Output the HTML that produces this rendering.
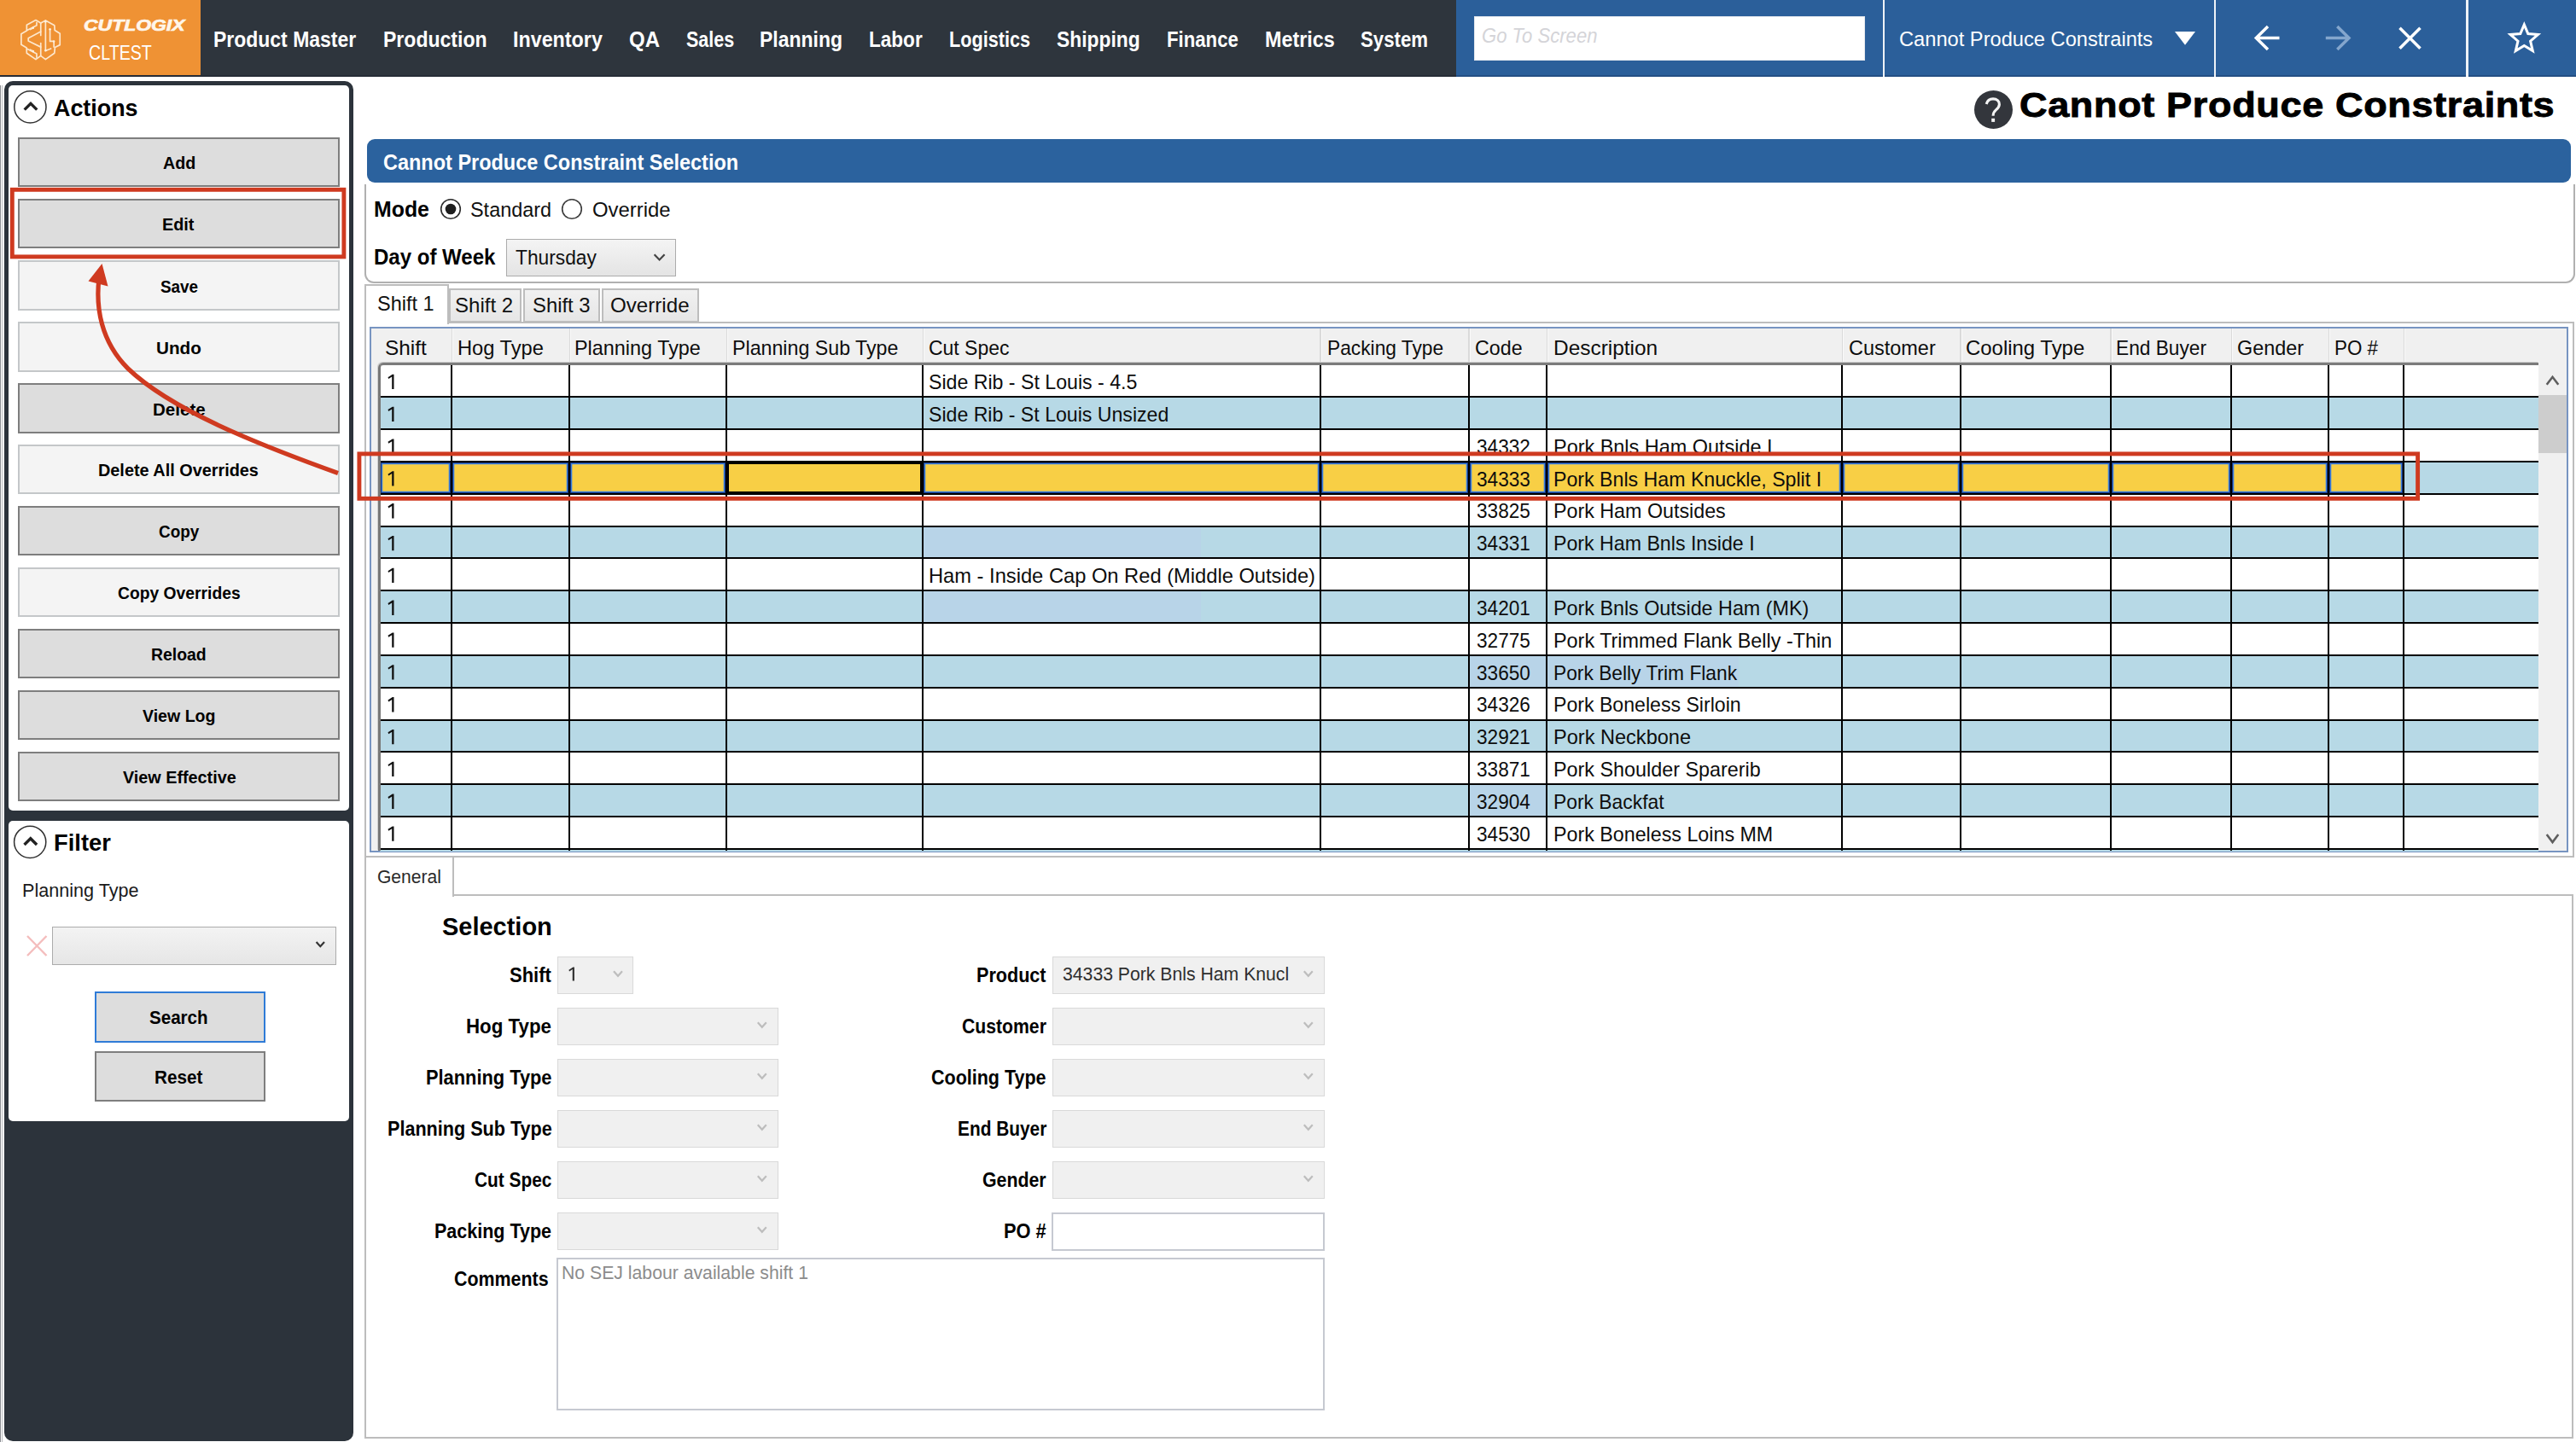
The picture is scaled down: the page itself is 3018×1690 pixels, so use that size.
<!DOCTYPE html>
<html><head><meta charset="utf-8"><title>Cannot Produce Constraints</title>
<style>
html,body{margin:0;padding:0;background:#fff;}
body{width:3018px;height:1690px;position:relative;overflow:hidden;font-family:"Liberation Sans", sans-serif;}
div,span.t,svg{position:absolute;box-sizing:border-box;}
span.t{white-space:pre;line-height:1;transform-origin:0 0;}
</style></head>
<body>
<!-- bg -->

<!-- top -->
<div style="left:0px;top:0px;width:3018px;height:90px;background:#2E353D;"></div>
<div style="left:0px;top:0px;width:234.5px;height:88.3px;background:#EF9234;"></div>
<div style="left:1706px;top:0px;width:1312px;height:90px;background:#2B5F9A;"></div>
<div style="left:0px;top:88px;width:3018px;height:2px;background:rgba(0,0,20,0.16);"></div>
<div style="left:1727px;top:18.75px;width:458px;height:51.75px;background:#fff;border:1px solid #e4e8ee;"></div>
<div style="left:2205.5px;top:0px;width:2.5px;height:90px;background:#eef2f7;"></div>
<div style="left:2593.5px;top:0px;width:2.5px;height:90px;background:#eef2f7;"></div>
<div style="left:2889px;top:0px;width:2.5px;height:90px;background:#eef2f7;"></div>
<svg style="left:0px;top:0px" width="3018" height="90" viewBox="0 0 3018 90">
<g fill="none" stroke="#fff3e2" stroke-width="1.7" stroke-linejoin="round" stroke-linecap="round" opacity="0.88"><path d="M31.32,29.32 L41.93,23.49 L47.75,27.03 L53.37,23.91 L63.78,29.73 L64.19,35.56 L70.23,39.30 L70.23,52.62 L64.40,55.53 L63.78,62.19 L53.37,69.68 L47.75,65.31 L41.93,69.68 L31.32,62.19 L31.11,55.95 L24.87,52.20 L24.87,39.72 L31.32,35.98 Z"/><path d="M31.73,35.56 L42.97,29.73 L42.97,26.40"/><path d="M47.75,37.02 L33.19,44.71 L33.19,48.04 L47.75,55.12"/><path d="M31.73,57.20 L42.97,63.02 L42.97,67.19"/><path d="M47.75,27.03 L47.75,41.38"/><path d="M47.75,50.54 L47.75,65.31"/><path d="M53.37,24.32 L53.37,59.49 L59.61,56.99"/><path d="M58.57,34.31 L58.57,48.46 L63.15,48.46 L63.15,55.12"/><path d="M38.81,32.65 L35.48,34.52"/><path d="M38.81,60.11 L35.48,58.24"/></g>
<g fill="#fff3e2" opacity="0.9"><circle cx="38.81" cy="32.65" r="1.3"/><circle cx="38.81" cy="60.11" r="1.3"/><circle cx="58.57" cy="34.31" r="1.3"/><circle cx="63.15" cy="48.46" r="1.3"/><circle cx="53.37" cy="25.36" r="1.3"/><circle cx="53.37" cy="59.28" r="1.3"/></g>
<path d="M2548,37 L2572,37 L2560,52.8 Z" fill="#fff"/>
<g fill="none" stroke="#fff" stroke-width="3.5" stroke-linecap="butt" stroke-linejoin="miter">
<path d="M2670.5,44.6 L2644,44.6 M2657,31.1 L2643.3,44.6 L2657,58.1"/>
<path d="M2811.5,32.8 L2835.5,56.8 M2835.5,32.8 L2811.5,56.8"/>
<path d="M2957.3,28.8 L2961.8,39.6 L2973.5,40.5 L2964.6,48.2 L2967.3,59.6 L2957.3,53.5 L2947.3,59.6 L2950.0,48.2 L2941.1,40.5 L2952.8,39.6 Z" stroke-width="3" stroke-linejoin="miter"/>
</g>
<g fill="none" stroke="#84a6cd" stroke-width="3.5">
<path d="M2724.8,44.6 L2751.3,44.6 M2738.3,31.1 L2752,44.6 L2738.3,58.1"/>
</g>
</svg>
<span class="t" style="left:250.08px;top:33.70px;font-size:25px;color:#fff;font-weight:bold;transform:scaleX(0.9186);">Product Master</span>
<span class="t" style="left:449.08px;top:33.70px;font-size:25px;color:#fff;font-weight:bold;transform:scaleX(0.9216);">Production</span>
<span class="t" style="left:601.07px;top:33.70px;font-size:25px;color:#fff;font-weight:bold;transform:scaleX(0.9317);">Inventory</span>
<span class="t" style="left:736.54px;top:33.70px;font-size:25px;color:#fff;font-weight:bold;transform:scaleX(0.9603);">QA</span>
<span class="t" style="left:804.00px;top:33.70px;font-size:25px;color:#fff;font-weight:bold;transform:scaleX(0.8614);">Sales</span>
<span class="t" style="left:890.08px;top:33.70px;font-size:25px;color:#fff;font-weight:bold;transform:scaleX(0.9198);">Planning</span>
<span class="t" style="left:1018.10px;top:33.70px;font-size:25px;color:#fff;font-weight:bold;transform:scaleX(0.9023);">Labor</span>
<span class="t" style="left:1111.63px;top:33.70px;font-size:25px;color:#fff;font-weight:bold;transform:scaleX(0.8670);">Logistics</span>
<span class="t" style="left:1238.00px;top:33.70px;font-size:25px;color:#fff;font-weight:bold;transform:scaleX(0.9134);">Shipping</span>
<span class="t" style="left:1366.61px;top:33.70px;font-size:25px;color:#fff;font-weight:bold;transform:scaleX(0.8871);">Finance</span>
<span class="t" style="left:1481.57px;top:33.70px;font-size:25px;color:#fff;font-weight:bold;transform:scaleX(0.9342);">Metrics</span>
<span class="t" style="left:1594.00px;top:33.70px;font-size:25px;color:#fff;font-weight:bold;transform:scaleX(0.8893);">System</span>
<span class="t" style="left:1736.10px;top:29.62px;font-size:24.5px;color:#d4d4d8;font-style:italic;transform:scaleX(0.9015);">Go To Screen</span>
<span class="t" style="left:2225.03px;top:34.12px;font-size:24.5px;color:#fff;transform:scaleX(0.9656);">Cannot Produce Constraints</span>
<span class="t" style="left:98.40px;top:20.91px;font-size:18.5px;color:#fff6ea;font-weight:bold;font-style:italic;-webkit-text-stroke:0.7px #fff6ea;transform:scaleX(1.2402);">CUTLOGIX</span>
<span class="t" style="left:104.18px;top:49.83px;font-size:24px;color:#fff;transform:scaleX(0.8183);">CLTEST</span>
<!-- side -->
<div style="left:0px;top:100px;width:1px;height:1590px;background:#8a8d91;"></div>
<div style="left:2px;top:100px;width:1px;height:1590px;background:#b9bbbe;"></div>
<div style="left:4.7px;top:94.7px;width:409.3px;height:1594.3px;background:#2C333B;border-radius:10px;"></div>
<div style="left:10.4px;top:99.6px;width:398.6px;height:850.4px;background:#fff;border-radius:5px;"></div>
<div style="left:10.4px;top:962px;width:398.6px;height:352.4px;background:#fff;border-radius:5px;"></div>
<div style="left:20.75px;top:160.6px;width:377.5px;height:58.8px;background:#DDDDDD;border:2px solid #7e7e7e;"></div>
<div style="left:20.75px;top:232.6px;width:377.5px;height:58.8px;background:#DDDDDD;border:2px solid #7e7e7e;"></div>
<div style="left:20.75px;top:305.1px;width:377.5px;height:58.8px;background:#F4F4F4;border:2px solid #C4C7C9;"></div>
<div style="left:20.75px;top:377.1px;width:377.5px;height:58.8px;background:#F4F4F4;border:2px solid #C4C7C9;"></div>
<div style="left:20.75px;top:449.1px;width:377.5px;height:58.8px;background:#DDDDDD;border:2px solid #7e7e7e;"></div>
<div style="left:20.75px;top:520.6px;width:377.5px;height:58.8px;background:#F4F4F4;border:2px solid #C4C7C9;"></div>
<div style="left:20.75px;top:592.6px;width:377.5px;height:58.8px;background:#DDDDDD;border:2px solid #7e7e7e;"></div>
<div style="left:20.75px;top:664.6px;width:377.5px;height:58.8px;background:#F4F4F4;border:2px solid #C4C7C9;"></div>
<div style="left:20.75px;top:736.6px;width:377.5px;height:58.8px;background:#DDDDDD;border:2px solid #7e7e7e;"></div>
<div style="left:20.75px;top:808.6px;width:377.5px;height:58.8px;background:#DDDDDD;border:2px solid #7e7e7e;"></div>
<div style="left:20.75px;top:880.6px;width:377.5px;height:58.8px;background:#DDDDDD;border:2px solid #7e7e7e;"></div>
<div style="left:60.75px;top:1086.25px;width:333.5px;height:45px;background:linear-gradient(#F3F3F3,#E6E6E6);border:1.5px solid #ACACAC;"></div>
<div style="left:110.75px;top:1162px;width:199.75px;height:59.75px;background:#DDDDDD;border:2px solid #2F7BD7;"></div>
<div style="left:110.75px;top:1232px;width:199.75px;height:59.25px;background:#DDDDDD;border:2px solid #7e7e7e;"></div>
<svg style="left:0px;top:90px" width="420" height="1600" viewBox="0 90 420 1600">
<g fill="none" stroke="#303030" stroke-width="1.5">
<circle cx="35.4" cy="125.4" r="18.6"/><circle cx="35.2" cy="986.8" r="18.6"/>
</g>
<g fill="none" stroke="#222" stroke-width="3.4" stroke-linejoin="miter">
<path d="M28.7,128.6 L36,121.3 L43.3,128.6"/><path d="M28.5,990 L35.8,982.7 L43.1,990"/>
</g>
<path d="M370.6,1104 L375.3,1109.2 L380,1104" fill="none" stroke="#333" stroke-width="2.2"/>
<path d="M32,1097 L54.5,1120 M54.5,1097 L32,1120" fill="none" stroke="#F4BDBD" stroke-width="2.4"/>
</svg>
<span class="t" style="left:63.00px;top:113.54px;font-size:27px;color:#000;font-weight:bold;transform:scaleX(0.9950);">Actions</span>
<span class="t" style="left:62.74px;top:975.04px;font-size:27px;color:#000;font-weight:bold;transform:scaleX(1.0122);">Filter</span>
<span class="t" style="left:190.75px;top:180.23px;font-size:21px;color:#000;font-weight:bold;transform:scaleX(0.9377);">Add</span>
<span class="t" style="left:190.31px;top:252.23px;font-size:21px;color:#000;font-weight:bold;transform:scaleX(0.9439);">Edit</span>
<span class="t" style="left:187.75px;top:324.73px;font-size:21px;color:#000;font-weight:bold;transform:scaleX(0.8994);">Save</span>
<span class="t" style="left:183.02px;top:396.73px;font-size:21px;color:#000;font-weight:bold;transform:scaleX(0.9842);">Undo</span>
<span class="t" style="left:178.52px;top:468.73px;font-size:21px;color:#000;font-weight:bold;transform:scaleX(0.9780);">Delete</span>
<span class="t" style="left:115.06px;top:540.23px;font-size:21px;color:#000;font-weight:bold;transform:scaleX(0.9449);">Delete All Overrides</span>
<span class="t" style="left:185.75px;top:612.23px;font-size:21px;color:#000;font-weight:bold;transform:scaleX(0.8993);">Copy</span>
<span class="t" style="left:138.00px;top:684.23px;font-size:21px;color:#000;font-weight:bold;transform:scaleX(0.9184);">Copy Overrides</span>
<span class="t" style="left:177.08px;top:756.23px;font-size:21px;color:#000;font-weight:bold;transform:scaleX(0.9239);">Reload</span>
<span class="t" style="left:167.15px;top:828.23px;font-size:21px;color:#000;font-weight:bold;transform:scaleX(0.9311);">View Log</span>
<span class="t" style="left:143.50px;top:900.23px;font-size:21px;color:#000;font-weight:bold;transform:scaleX(0.9417);">View Effective</span>
<span class="t" style="left:25.99px;top:1033.86px;font-size:21.5px;color:#1a1a1a;transform:scaleX(1.0052);">Planning Type</span>
<span class="t" style="left:175.00px;top:1183.36px;font-size:21.5px;color:#000;font-weight:bold;transform:scaleX(0.9564);">Search</span>
<span class="t" style="left:180.79px;top:1253.36px;font-size:21.5px;color:#000;font-weight:bold;transform:scaleX(0.9626);">Reset</span>
<!-- main -->
<div style="left:2312.6px;top:105.8px;width:45.2px;height:45.2px;background:#33363C;border-radius:50%;"></div>
<svg style="left:2310px;top:104px" width="50" height="50" viewBox="2310 104 50 50"><path d="M2327.2,122 C2328.4,117.6 2331.4,115.9 2335,115.9 C2339.6,115.9 2342.4,118.6 2342.4,122.2 C2342.4,125.4 2340.4,127.2 2338.4,128.9 C2336.2,130.8 2335.1,132.3 2335.1,135.7" fill="none" stroke="#f4f4f4" stroke-width="3.1"/><rect x="2333.2" y="138.8" width="3.9" height="4.1" fill="#f4f4f4"/></svg>
<div style="left:427px;top:216px;width:2589.5px;height:116px;border:2px solid #B0B0B0;border-top:none;border-radius:0 0 11px 11px;background:#fff;"></div>
<div style="left:430px;top:162.5px;width:2581.5px;height:51.5px;background:#2B629E;border-radius:9px;"></div>
<div style="left:592.5px;top:279.5px;width:199.5px;height:44px;background:linear-gradient(#F4F4F4,#E4E4E4);border:1.5px solid #ACACAC;"></div>
<div style="left:427px;top:376.5px;width:2588.5px;height:628.8px;border:2px solid #BDBDBD;background:#fff;"></div>
<div style="left:525.5px;top:337.5px;width:85.5px;height:40.5px;background:linear-gradient(#F1F1F1,#E6E6E6);border:2px solid #BDBDBD;"></div>
<div style="left:613px;top:337.5px;width:89.5px;height:40.5px;background:linear-gradient(#F1F1F1,#E6E6E6);border:2px solid #BDBDBD;"></div>
<div style="left:705px;top:337.5px;width:114px;height:40.5px;background:linear-gradient(#F1F1F1,#E6E6E6);border:2px solid #BDBDBD;"></div>
<div style="left:427px;top:333px;width:99px;height:47px;background:#fff;border:2px solid #BDBDBD;border-bottom:none;"></div>
<svg style="left:420px;top:220px" width="400" height="110" viewBox="420 220 400 110">
<g fill="#fff" stroke="#2b2b2b" stroke-width="1.6"><circle cx="528" cy="245" r="11.3"/><circle cx="670" cy="245" r="11.3" stroke="#3a3a3a"/></g>
<circle cx="528" cy="245" r="6.3" fill="#1e1e1e"/>
<path d="M766.6,298.2 L772.6,304.4 L778.6,298.2" fill="none" stroke="#444" stroke-width="2.2"/>
</svg>
<span class="t" style="left:2365.90px;top:103.39px;font-size:41px;color:#000;font-weight:bold;letter-spacing:0.6px;-webkit-text-stroke:0.9px #000;transform:scaleX(1.0978);">Cannot Produce Constraints</span>
<span class="t" style="left:449.06px;top:178.20px;font-size:25px;color:#fff;font-weight:bold;transform:scaleX(0.9391);">Cannot Produce Constraint Selection</span>
<span class="t" style="left:438.01px;top:233.20px;font-size:25px;color:#000;font-weight:bold;transform:scaleX(0.9943);">Mode</span>
<span class="t" style="left:551.04px;top:233.62px;font-size:24.5px;color:#111;transform:scaleX(0.9559);">Standard</span>
<span class="t" style="left:694.03px;top:233.62px;font-size:24.5px;color:#111;transform:scaleX(0.9749);">Override</span>
<span class="t" style="left:438.04px;top:289.20px;font-size:25px;color:#000;font-weight:bold;transform:scaleX(0.9606);">Day of Week</span>
<span class="t" style="left:604.00px;top:289.62px;font-size:24.5px;color:#111;transform:scaleX(0.9283);">Thursday</span>
<span class="t" style="left:441.54px;top:344.12px;font-size:24.5px;color:#111;transform:scaleX(0.9583);">Shift 1</span>
<span class="t" style="left:533.02px;top:345.62px;font-size:24.5px;color:#111;transform:scaleX(0.9804);">Shift 2</span>
<span class="t" style="left:624.03px;top:345.62px;font-size:24.5px;color:#111;transform:scaleX(0.9730);">Shift 3</span>
<span class="t" style="left:715.01px;top:345.62px;font-size:24.5px;color:#111;transform:scaleX(0.9857);">Override</span>
<!-- grid -->
<div style="left:432.5px;top:382.5px;width:2576.0px;height:616.5px;border:2px solid #7794C1;background:#fff;overflow:hidden;"></div>
<div style="left:434.5px;top:384.5px;width:2572.0px;height:43.0px;background:#F0F0F0;"></div>
<div style="left:434.5px;top:427.5px;width:9.5px;height:569.5px;background:#F1F1F1;"></div>
<div style="left:528.5px;top:384.5px;width:1.3px;height:40px;background:#DADADA;"></div>
<div style="left:529.8px;top:384.5px;width:1.2px;height:40px;background:#FAFAFA;"></div>
<div style="left:666.5px;top:384.5px;width:1.3px;height:40px;background:#DADADA;"></div>
<div style="left:667.8px;top:384.5px;width:1.2px;height:40px;background:#FAFAFA;"></div>
<div style="left:850.5px;top:384.5px;width:1.3px;height:40px;background:#DADADA;"></div>
<div style="left:851.8px;top:384.5px;width:1.2px;height:40px;background:#FAFAFA;"></div>
<div style="left:1080.5px;top:384.5px;width:1.3px;height:40px;background:#DADADA;"></div>
<div style="left:1081.8px;top:384.5px;width:1.2px;height:40px;background:#FAFAFA;"></div>
<div style="left:1546.25px;top:384.5px;width:1.3px;height:40px;background:#DADADA;"></div>
<div style="left:1547.55px;top:384.5px;width:1.2px;height:40px;background:#FAFAFA;"></div>
<div style="left:1720.25px;top:384.5px;width:1.3px;height:40px;background:#DADADA;"></div>
<div style="left:1721.55px;top:384.5px;width:1.2px;height:40px;background:#FAFAFA;"></div>
<div style="left:1812.0px;top:384.5px;width:1.3px;height:40px;background:#DADADA;"></div>
<div style="left:1813.3px;top:384.5px;width:1.2px;height:40px;background:#FAFAFA;"></div>
<div style="left:2157.75px;top:384.5px;width:1.3px;height:40px;background:#DADADA;"></div>
<div style="left:2159.05px;top:384.5px;width:1.2px;height:40px;background:#FAFAFA;"></div>
<div style="left:2296.25px;top:384.5px;width:1.3px;height:40px;background:#DADADA;"></div>
<div style="left:2297.55px;top:384.5px;width:1.2px;height:40px;background:#FAFAFA;"></div>
<div style="left:2472.25px;top:384.5px;width:1.3px;height:40px;background:#DADADA;"></div>
<div style="left:2473.55px;top:384.5px;width:1.2px;height:40px;background:#FAFAFA;"></div>
<div style="left:2614.0px;top:384.5px;width:1.3px;height:40px;background:#DADADA;"></div>
<div style="left:2615.3px;top:384.5px;width:1.2px;height:40px;background:#FAFAFA;"></div>
<div style="left:2727.75px;top:384.5px;width:1.3px;height:40px;background:#DADADA;"></div>
<div style="left:2729.05px;top:384.5px;width:1.2px;height:40px;background:#FAFAFA;"></div>
<div style="left:2816.0px;top:384.5px;width:1.3px;height:40px;background:#DADADA;"></div>
<div style="left:2817.3px;top:384.5px;width:1.2px;height:40px;background:#FAFAFA;"></div>
<div style="left:445px;top:465.33px;width:2528.5px;height:37.83px;background:#B7D9E6;"></div>
<div style="left:445px;top:540.99px;width:2528.5px;height:37.83px;background:#B7D9E6;"></div>
<div style="left:445px;top:616.65px;width:2528.5px;height:37.83px;background:#B7D9E6;"></div>
<div style="left:445px;top:692.31px;width:2528.5px;height:37.83px;background:#B7D9E6;"></div>
<div style="left:445px;top:767.97px;width:2528.5px;height:37.83px;background:#B7D9E6;"></div>
<div style="left:445px;top:843.63px;width:2528.5px;height:37.83px;background:#B7D9E6;"></div>
<div style="left:445px;top:919.29px;width:2528.5px;height:37.83px;background:#B7D9E6;"></div>
<div style="left:445px;top:994.95px;width:2528.5px;height:3.05px;background:#B7D9E6;"></div>
<div style="left:1082px;top:616.65px;width:325px;height:37.83px;background:#B8D4E8;"></div>
<div style="left:1082px;top:692.31px;width:325px;height:37.83px;background:#B8D4E8;"></div>
<div style="left:1722px;top:767.97px;width:315px;height:37.83px;background:#B8D4E8;"></div>
<div style="left:1722px;top:919.29px;width:90px;height:37.83px;background:#B8D4E8;"></div>
<div style="left:446px;top:542px;width:82px;height:36px;background:#F8CF45;border:1px solid #16357C;box-shadow:inset 0 0 0 1.3px #3A7FE0;"></div>
<div style="left:530px;top:542px;width:136px;height:36px;background:#F8CF45;border:1px solid #16357C;box-shadow:inset 0 0 0 1.3px #3A7FE0;"></div>
<div style="left:668px;top:542px;width:182px;height:36px;background:#F8CF45;border:1px solid #16357C;box-shadow:inset 0 0 0 1.3px #3A7FE0;"></div>
<div style="left:1082px;top:542px;width:464px;height:36px;background:#F8CF45;border:1px solid #16357C;box-shadow:inset 0 0 0 1.3px #3A7FE0;"></div>
<div style="left:1548px;top:542px;width:172px;height:36px;background:#F8CF45;border:1px solid #16357C;box-shadow:inset 0 0 0 1.3px #3A7FE0;"></div>
<div style="left:1722px;top:542px;width:89px;height:36px;background:#F8CF45;border:1px solid #16357C;box-shadow:inset 0 0 0 1.3px #3A7FE0;"></div>
<div style="left:1813px;top:542px;width:344px;height:36px;background:#F8CF45;border:1px solid #16357C;box-shadow:inset 0 0 0 1.3px #3A7FE0;"></div>
<div style="left:2159px;top:542px;width:137px;height:36px;background:#F8CF45;border:1px solid #16357C;box-shadow:inset 0 0 0 1.3px #3A7FE0;"></div>
<div style="left:2298px;top:542px;width:174px;height:36px;background:#F8CF45;border:1px solid #16357C;box-shadow:inset 0 0 0 1.3px #3A7FE0;"></div>
<div style="left:2474px;top:542px;width:139px;height:36px;background:#F8CF45;border:1px solid #16357C;box-shadow:inset 0 0 0 1.3px #3A7FE0;"></div>
<div style="left:2615px;top:542px;width:112px;height:36px;background:#F8CF45;border:1px solid #16357C;box-shadow:inset 0 0 0 1.3px #3A7FE0;"></div>
<div style="left:2729px;top:542px;width:86px;height:36px;background:#F8CF45;border:1px solid #16357C;box-shadow:inset 0 0 0 1.3px #3A7FE0;"></div>
<div style="left:446px;top:464px;width:2527.5px;height:2px;background:#000;"></div>
<div style="left:446px;top:502px;width:2527.5px;height:2px;background:#000;"></div>
<div style="left:446px;top:540px;width:2527.5px;height:2px;background:#000;"></div>
<div style="left:446px;top:578px;width:2527.5px;height:2px;background:#000;"></div>
<div style="left:446px;top:616px;width:2527.5px;height:2px;background:#000;"></div>
<div style="left:446px;top:653px;width:2527.5px;height:2px;background:#000;"></div>
<div style="left:446px;top:691px;width:2527.5px;height:2px;background:#000;"></div>
<div style="left:446px;top:729px;width:2527.5px;height:2px;background:#000;"></div>
<div style="left:446px;top:767px;width:2527.5px;height:2px;background:#000;"></div>
<div style="left:446px;top:805px;width:2527.5px;height:2px;background:#000;"></div>
<div style="left:446px;top:843px;width:2527.5px;height:2px;background:#000;"></div>
<div style="left:446px;top:880px;width:2527.5px;height:2px;background:#000;"></div>
<div style="left:446px;top:918px;width:2527.5px;height:2px;background:#000;"></div>
<div style="left:446px;top:956px;width:2527.5px;height:2px;background:#000;"></div>
<div style="left:446px;top:994px;width:2527.5px;height:2px;background:#000;"></div>
<div style="left:528px;top:428.0px;width:2px;height:569.0px;background:#000;"></div>
<div style="left:666px;top:428.0px;width:2px;height:569.0px;background:#000;"></div>
<div style="left:850px;top:428.0px;width:2px;height:569.0px;background:#000;"></div>
<div style="left:1080px;top:428.0px;width:2px;height:569.0px;background:#000;"></div>
<div style="left:1546px;top:428.0px;width:2px;height:569.0px;background:#000;"></div>
<div style="left:1720px;top:428.0px;width:2px;height:569.0px;background:#000;"></div>
<div style="left:1811px;top:428.0px;width:2px;height:569.0px;background:#000;"></div>
<div style="left:2157px;top:428.0px;width:2px;height:569.0px;background:#000;"></div>
<div style="left:2296px;top:428.0px;width:2px;height:569.0px;background:#000;"></div>
<div style="left:2472px;top:428.0px;width:2px;height:569.0px;background:#000;"></div>
<div style="left:2613px;top:428.0px;width:2px;height:569.0px;background:#000;"></div>
<div style="left:2727px;top:428.0px;width:2px;height:569.0px;background:#000;"></div>
<div style="left:2815px;top:428.0px;width:2px;height:569.0px;background:#000;"></div>
<div style="left:443px;top:424.6px;width:2530.5px;height:572.4px;border-top:3.4px solid #7b7b7b;border-left:3px solid #787878;border-top-left-radius:6px;box-shadow:-1px -1px 0 0 #CFCFCF;"></div>
<div style="left:850px;top:540px;width:232px;height:40px;background:#F8CF45;border:4px solid #000;"></div>
<div style="left:2973.5px;top:423.5px;width:33.0px;height:573.5px;background:#F0F0F0;"></div>
<div style="left:2973.5px;top:462.5px;width:33.0px;height:68.7px;background:#CDCDCD;"></div>
<svg style="left:2970px;top:430px" width="40" height="570" viewBox="2970 430 40 570">
<g fill="none" stroke="#5e5e5e" stroke-width="2.6"><path d="M2983.7,450.8 L2990.5,441.8 L2997.3,450.8"/><path d="M2983.7,978 L2990.5,987 L2997.3,978"/></g></svg>
<svg style="left:450px;top:430px" width="20" height="570" viewBox="450 430 20 570"><g fill="#101010"><path transform="translate(454.3,456.10)" d="M0.2,-13.9 L5.5,-17.3 L7.2,-17.3 L7.2,0 L4.9,0 L4.9,-14.5 L0.9,-12 Z"/><path transform="translate(454.3,493.93)" d="M0.2,-13.9 L5.5,-17.3 L7.2,-17.3 L7.2,0 L4.9,0 L4.9,-14.5 L0.9,-12 Z"/><path transform="translate(454.3,531.76)" d="M0.2,-13.9 L5.5,-17.3 L7.2,-17.3 L7.2,0 L4.9,0 L4.9,-14.5 L0.9,-12 Z"/><path transform="translate(454.3,569.59)" d="M0.2,-13.9 L5.5,-17.3 L7.2,-17.3 L7.2,0 L4.9,0 L4.9,-14.5 L0.9,-12 Z"/><path transform="translate(454.3,607.42)" d="M0.2,-13.9 L5.5,-17.3 L7.2,-17.3 L7.2,0 L4.9,0 L4.9,-14.5 L0.9,-12 Z"/><path transform="translate(454.3,645.25)" d="M0.2,-13.9 L5.5,-17.3 L7.2,-17.3 L7.2,0 L4.9,0 L4.9,-14.5 L0.9,-12 Z"/><path transform="translate(454.3,683.08)" d="M0.2,-13.9 L5.5,-17.3 L7.2,-17.3 L7.2,0 L4.9,0 L4.9,-14.5 L0.9,-12 Z"/><path transform="translate(454.3,720.91)" d="M0.2,-13.9 L5.5,-17.3 L7.2,-17.3 L7.2,0 L4.9,0 L4.9,-14.5 L0.9,-12 Z"/><path transform="translate(454.3,758.74)" d="M0.2,-13.9 L5.5,-17.3 L7.2,-17.3 L7.2,0 L4.9,0 L4.9,-14.5 L0.9,-12 Z"/><path transform="translate(454.3,796.57)" d="M0.2,-13.9 L5.5,-17.3 L7.2,-17.3 L7.2,0 L4.9,0 L4.9,-14.5 L0.9,-12 Z"/><path transform="translate(454.3,834.40)" d="M0.2,-13.9 L5.5,-17.3 L7.2,-17.3 L7.2,0 L4.9,0 L4.9,-14.5 L0.9,-12 Z"/><path transform="translate(454.3,872.23)" d="M0.2,-13.9 L5.5,-17.3 L7.2,-17.3 L7.2,0 L4.9,0 L4.9,-14.5 L0.9,-12 Z"/><path transform="translate(454.3,910.06)" d="M0.2,-13.9 L5.5,-17.3 L7.2,-17.3 L7.2,0 L4.9,0 L4.9,-14.5 L0.9,-12 Z"/><path transform="translate(454.3,947.89)" d="M0.2,-13.9 L5.5,-17.3 L7.2,-17.3 L7.2,0 L4.9,0 L4.9,-14.5 L0.9,-12 Z"/><path transform="translate(454.3,985.72)" d="M0.2,-13.9 L5.5,-17.3 L7.2,-17.3 L7.2,0 L4.9,0 L4.9,-14.5 L0.9,-12 Z"/></g></svg>
<span class="t" style="left:451.49px;top:396.03px;font-size:24px;color:#0d0d0d;transform:scaleX(1.0136);">Shift</span>
<span class="t" style="left:536.01px;top:396.03px;font-size:24px;color:#0d0d0d;transform:scaleX(0.9864);">Hog Type</span>
<span class="t" style="left:673.02px;top:396.03px;font-size:24px;color:#0d0d0d;transform:scaleX(0.9750);">Planning Type</span>
<span class="t" style="left:858.03px;top:396.03px;font-size:24px;color:#0d0d0d;transform:scaleX(0.9669);">Planning Sub Type</span>
<span class="t" style="left:1088.04px;top:396.03px;font-size:24px;color:#0d0d0d;transform:scaleX(0.9568);">Cut Spec</span>
<span class="t" style="left:1555.05px;top:396.03px;font-size:24px;color:#0d0d0d;transform:scaleX(0.9479);">Packing Type</span>
<span class="t" style="left:1727.78px;top:396.03px;font-size:24px;color:#0d0d0d;transform:scaleX(0.9683);">Code</span>
<span class="t" style="left:1819.73px;top:396.03px;font-size:24px;color:#0d0d0d;transform:scaleX(1.0174);">Description</span>
<span class="t" style="left:2165.77px;top:396.03px;font-size:24px;color:#0d0d0d;transform:scaleX(0.9778);">Customer</span>
<span class="t" style="left:2303.30px;top:396.03px;font-size:24px;color:#0d0d0d;transform:scaleX(0.9968);">Cooling Type</span>
<span class="t" style="left:2479.30px;top:396.03px;font-size:24px;color:#0d0d0d;transform:scaleX(0.9453);">End Buyer</span>
<span class="t" style="left:2620.53px;top:396.03px;font-size:24px;color:#0d0d0d;transform:scaleX(0.9740);">Gender</span>
<span class="t" style="left:2734.82px;top:396.03px;font-size:24px;color:#0d0d0d;transform:scaleX(0.9339);">PO #</span>
<span class="t" style="left:1088.04px;top:436.13px;font-size:24px;color:#0d0d0d;transform:scaleX(0.9639);">Side Rib - St Louis - 4.5</span>
<span class="t" style="left:1088.04px;top:473.96px;font-size:24px;color:#0d0d0d;transform:scaleX(0.9628);">Side Rib - St Louis Unsized</span>
<span class="t" style="left:1729.50px;top:511.79px;font-size:24px;color:#0d0d0d;transform:scaleX(0.9414);">34332</span>
<span class="t" style="left:1820.02px;top:511.79px;font-size:24px;color:#0d0d0d;transform:scaleX(0.9766);">Pork Bnls Ham Outside I</span>
<span class="t" style="left:1729.50px;top:549.62px;font-size:24px;color:#0d0d0d;transform:scaleX(0.9414);">34333</span>
<span class="t" style="left:1820.03px;top:549.62px;font-size:24px;color:#0d0d0d;transform:scaleX(0.9650);">Pork Bnls Ham Knuckle, Split I</span>
<span class="t" style="left:1729.50px;top:587.45px;font-size:24px;color:#0d0d0d;transform:scaleX(0.9414);">33825</span>
<span class="t" style="left:1820.03px;top:587.45px;font-size:24px;color:#0d0d0d;transform:scaleX(0.9695);">Pork Ham Outsides</span>
<span class="t" style="left:1729.50px;top:625.28px;font-size:24px;color:#0d0d0d;transform:scaleX(0.9414);">34331</span>
<span class="t" style="left:1820.03px;top:625.28px;font-size:24px;color:#0d0d0d;transform:scaleX(0.9651);">Pork Ham Bnls Inside I</span>
<span class="t" style="left:1088.01px;top:663.11px;font-size:24px;color:#0d0d0d;transform:scaleX(0.9872);">Ham - Inside Cap On Red (Middle Outside)</span>
<span class="t" style="left:1729.50px;top:700.94px;font-size:24px;color:#0d0d0d;transform:scaleX(0.9414);">34201</span>
<span class="t" style="left:1820.03px;top:700.94px;font-size:24px;color:#0d0d0d;transform:scaleX(0.9713);">Pork Bnls Outside Ham (MK)</span>
<span class="t" style="left:1729.50px;top:738.77px;font-size:24px;color:#0d0d0d;transform:scaleX(0.9414);">32775</span>
<span class="t" style="left:1820.03px;top:738.77px;font-size:24px;color:#0d0d0d;transform:scaleX(0.9744);">Pork Trimmed Flank Belly -Thin</span>
<span class="t" style="left:1729.50px;top:776.60px;font-size:24px;color:#0d0d0d;transform:scaleX(0.9414);">33650</span>
<span class="t" style="left:1820.05px;top:776.60px;font-size:24px;color:#0d0d0d;transform:scaleX(0.9487);">Pork Belly Trim Flank</span>
<span class="t" style="left:1729.50px;top:814.43px;font-size:24px;color:#0d0d0d;transform:scaleX(0.9414);">34326</span>
<span class="t" style="left:1820.04px;top:814.43px;font-size:24px;color:#0d0d0d;transform:scaleX(0.9630);">Pork Boneless Sirloin</span>
<span class="t" style="left:1729.50px;top:852.26px;font-size:24px;color:#0d0d0d;transform:scaleX(0.9414);">32921</span>
<span class="t" style="left:1820.02px;top:852.26px;font-size:24px;color:#0d0d0d;transform:scaleX(0.9813);">Pork Neckbone</span>
<span class="t" style="left:1729.50px;top:890.09px;font-size:24px;color:#0d0d0d;transform:scaleX(0.9414);">33871</span>
<span class="t" style="left:1820.03px;top:890.09px;font-size:24px;color:#0d0d0d;transform:scaleX(0.9725);">Pork Shoulder Sparerib</span>
<span class="t" style="left:1729.50px;top:927.92px;font-size:24px;color:#0d0d0d;transform:scaleX(0.9414);">32904</span>
<span class="t" style="left:1820.05px;top:927.92px;font-size:24px;color:#0d0d0d;transform:scaleX(0.9528);">Pork Backfat</span>
<span class="t" style="left:1729.50px;top:965.75px;font-size:24px;color:#0d0d0d;transform:scaleX(0.9414);">34530</span>
<span class="t" style="left:1820.03px;top:965.75px;font-size:24px;color:#0d0d0d;transform:scaleX(0.9691);">Pork Boneless Loins MM</span>
<!-- form -->
<div style="left:427px;top:1048px;width:2588px;height:637.5px;border:2px solid #BDBDBD;background:#fff;"></div>
<div style="left:427px;top:1005.3px;width:105px;height:46px;background:#fff;border:2px solid #BDBDBD;border-bottom:none;border-top:none;"></div>
<div style="left:652.5px;top:1120.5px;width:89.25px;height:44.5px;background:#F0F0F0;border:1.5px solid #D9D9D9;"></div>
<div style="left:652.5px;top:1180.5px;width:259.25px;height:44.5px;background:#F0F0F0;border:1.5px solid #D9D9D9;"></div>
<div style="left:652.5px;top:1240.5px;width:259.25px;height:44.5px;background:#F0F0F0;border:1.5px solid #D9D9D9;"></div>
<div style="left:652.5px;top:1300.5px;width:259.25px;height:44.5px;background:#F0F0F0;border:1.5px solid #D9D9D9;"></div>
<div style="left:652.5px;top:1360.5px;width:259.25px;height:44.5px;background:#F0F0F0;border:1.5px solid #D9D9D9;"></div>
<div style="left:652.5px;top:1420.5px;width:259.25px;height:44.5px;background:#F0F0F0;border:1.5px solid #D9D9D9;"></div>
<div style="left:1232.5px;top:1120.5px;width:319.25px;height:44.5px;background:#F0F0F0;border:1.5px solid #D9D9D9;"></div>
<div style="left:1232.5px;top:1180.5px;width:319.25px;height:44.5px;background:#F0F0F0;border:1.5px solid #D9D9D9;"></div>
<div style="left:1232.5px;top:1240.5px;width:319.25px;height:44.5px;background:#F0F0F0;border:1.5px solid #D9D9D9;"></div>
<div style="left:1232.5px;top:1300.5px;width:319.25px;height:44.5px;background:#F0F0F0;border:1.5px solid #D9D9D9;"></div>
<div style="left:1232.5px;top:1360.5px;width:319.25px;height:44.5px;background:#F0F0F0;border:1.5px solid #D9D9D9;"></div>
<div style="left:1232px;top:1420.5px;width:320px;height:45px;background:#fff;border:2px solid #C6C9D1;"></div>
<svg style="left:660px;top:1125px" width="20" height="30" viewBox="660 1125 20 30"><path transform="translate(666.2,1149.6) scale(0.93)" d="M0.2,-13.9 L5.5,-17.3 L7.2,-17.3 L7.2,0 L4.9,0 L4.9,-14.5 L0.9,-12 Z" fill="#2e2e2e"/></svg>
<div style="left:652px;top:1474px;width:900px;height:179px;background:#fff;border:2px solid #C6C9D1;"></div>
<svg style="left:640px;top:1100px" width="920" height="400" viewBox="640 1100 920 400"><path d="M719,1138.3 L724,1143.8 L729,1138.3 M887.8,1198.3 L892.8,1203.8 L897.8,1198.3 M887.8,1258.3 L892.8,1263.8 L897.8,1258.3 M887.8,1318.3 L892.8,1323.8 L897.8,1318.3 M887.8,1378.3 L892.8,1383.8 L897.8,1378.3 M887.8,1438.3 L892.8,1443.8 L897.8,1438.3 M1527.8,1138.3 L1532.8,1143.8 L1537.8,1138.3 M1527.8,1198.3 L1532.8,1203.8 L1537.8,1198.3 M1527.8,1258.3 L1532.8,1263.8 L1537.8,1258.3 M1527.8,1318.3 L1532.8,1323.8 L1537.8,1318.3 M1527.8,1378.3 L1532.8,1383.8 L1537.8,1378.3" fill="none" stroke="#BDBDBD" stroke-width="2.2"/></svg>
<span class="t" style="left:442.06px;top:1016.78px;font-size:22.5px;color:#2a2a2a;transform:scaleX(0.9353);">General</span>
<span class="t" style="left:518.00px;top:1070.54px;font-size:30px;color:#000;font-weight:bold;transform:scaleX(0.9656);">Selection</span>
<span class="t" style="left:597.30px;top:1132.35px;font-size:23.5px;color:#000;font-weight:bold;transform:scaleX(0.9354);">Shift</span>
<span class="t" style="left:546.35px;top:1192.35px;font-size:23.5px;color:#000;font-weight:bold;transform:scaleX(0.9497);">Hog Type</span>
<span class="t" style="left:498.87px;top:1252.35px;font-size:23.5px;color:#000;font-weight:bold;transform:scaleX(0.9285);">Planning Type</span>
<span class="t" style="left:453.58px;top:1312.35px;font-size:23.5px;color:#000;font-weight:bold;transform:scaleX(0.9190);">Planning Sub Type</span>
<span class="t" style="left:556.05px;top:1372.35px;font-size:23.5px;color:#000;font-weight:bold;transform:scaleX(0.8867);">Cut Spec</span>
<span class="t" style="left:509.39px;top:1432.35px;font-size:23.5px;color:#000;font-weight:bold;transform:scaleX(0.9147);">Packing Type</span>
<span class="t" style="left:1144.08px;top:1132.25px;font-size:23.5px;color:#000;font-weight:bold;transform:scaleX(0.9181);">Product</span>
<span class="t" style="left:1127.00px;top:1192.25px;font-size:23.5px;color:#000;font-weight:bold;transform:scaleX(0.9015);">Customer</span>
<span class="t" style="left:1091.25px;top:1252.25px;font-size:23.5px;color:#000;font-weight:bold;transform:scaleX(0.9149);">Cooling Type</span>
<span class="t" style="left:1121.61px;top:1312.25px;font-size:23.5px;color:#000;font-weight:bold;transform:scaleX(0.8872);">End Buyer</span>
<span class="t" style="left:1151.25px;top:1372.25px;font-size:23.5px;color:#000;font-weight:bold;transform:scaleX(0.9071);">Gender</span>
<span class="t" style="left:1176.07px;top:1432.25px;font-size:23.5px;color:#000;font-weight:bold;transform:scaleX(0.9289);">PO #</span>
<span class="t" style="left:1244.50px;top:1130.78px;font-size:22.5px;color:#2e2e2e;transform:scaleX(0.9424);">34333 Pork Bnls Ham Knucl</span>
<span class="t" style="left:531.80px;top:1487.95px;font-size:23.5px;color:#000;font-weight:bold;transform:scaleX(0.9105);">Comments</span>
<span class="t" style="left:658.26px;top:1482.31px;font-size:21.5px;color:#8c8c8c;transform:scaleX(0.9868);">No SEJ labour available shift 1</span>
<!-- anno -->
<svg style="left:0px;top:200px" width="3018" height="420" viewBox="0 200 3018 420">
<g fill="none" stroke="#CF3A20" stroke-width="4.9">
<rect x="14.3" y="222.3" width="388.6" height="78.6"/>
<rect x="420.9" y="531.9" width="2411.7" height="52.4"/>
<path d="M396,554.5 C 300,520 200,480 150,432 C 118,400 112,360 116,326" stroke-width="5.2"/>
</g>
<path d="M119.5,309 L103.5,329.5 L126.5,335.5 Z" fill="#CF3A20"/>
</svg>
</body></html>
